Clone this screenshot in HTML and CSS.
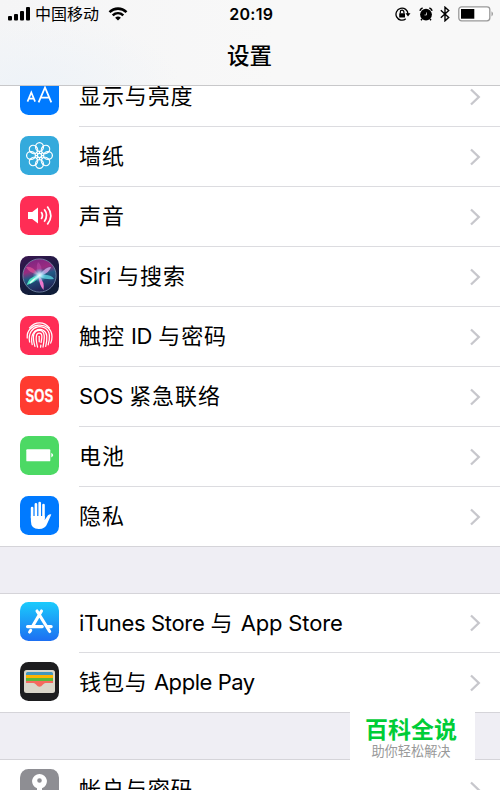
FILE: index.html
```html
<!DOCTYPE html>
<html lang="zh-CN">
<head>
<meta charset="utf-8">
<title>设置</title>
<link rel="stylesheet" href="styles.css">
</head>
<body>
<svg class="defs" width="0" height="0" aria-hidden="true">
  <defs>
    <symbol id="chevron" viewBox="0 0 12 18"><path d="M2 1.5 9.8 9 2 16.5" fill="none" stroke="#c7c7cc" stroke-width="2.3"/></symbol>
    <ellipse id="petal" cx="19.5" cy="11" rx="3.9" ry="4.4"/>
    <linearGradient id="store" x1="0" y1="0" x2="0" y2="1"><stop offset="0" stop-color="#1bcbfc"/><stop offset="1" stop-color="#1d6ff2"/></linearGradient>
    <linearGradient id="siribg" x1="0" y1="0" x2="0.4" y2="1"><stop offset="0" stop-color="#3b1550"/><stop offset=".5" stop-color="#1c1c42"/><stop offset="1" stop-color="#101d38"/></linearGradient>
    <linearGradient id="orb" x1="0.2" y1="0" x2="0.5" y2="1"><stop offset="0" stop-color="#7b2583"/><stop offset=".35" stop-color="#9a2b80"/><stop offset=".55" stop-color="#215b86"/><stop offset="1" stop-color="#222052"/></linearGradient>
    <radialGradient id="glow"><stop offset="0" stop-color="#fff"/><stop offset=".35" stop-color="#bdf3ff" stop-opacity=".75"/><stop offset="1" stop-color="#55c8ec" stop-opacity="0"/></radialGradient>
  </defs>
</svg>

<main class="phone">
  <header class="header">
    <div class="status">
      <div class="status-left">
        <svg width="23" height="14" viewBox="0 0 23 14"><rect x="0" y="9" width="4" height="4.500" rx="1"/><rect x="6" y="7" width="4" height="6.500" rx="1"/><rect x="12" y="4" width="4" height="9.500" rx="1"/><rect x="18" y="0" width="4" height="13.500" rx="1"/></svg>
        <span class="carrier">中国移动</span>
        <svg width="20" height="14" viewBox="0 0 20 14" fill="none" stroke="#000" stroke-width="2.6"><path d="M1.5 5.1C6.4.5 13.6.5 18.5 5.1M4.7 8.4c3.1-2.8 7.5-2.8 10.6 0"/><path d="M7.1 10.7q2.9-2.2 5.8 0L10 13.5Z" fill="#000" stroke="none"/></svg>
      </div>
      <time class="clock">20:19</time>
      <div class="status-right">
        <svg width="16" height="14" viewBox="0 0 16 14"><path d="M10.8 11.8A6 6 0 1 1 13 7" fill="none" stroke="#000" stroke-width="1.3"/><path d="M10.5 6.2h5L13 9.5Z"/><rect x="4.2" y="6.2" width="5.8" height="4.3" rx=".5"/><path d="M5.3 6.5V5a1.8 1.8 0 0 1 3.6 0v1.5" fill="none" stroke="#000" stroke-width="1.2"/></svg>
        <svg class="alarm" width="14" height="14" viewBox="0 0 14 14"><circle cx="7" cy="7.6" r="5.900"/><path d="M.9 3.7Q1.5 1.7 3.6 1M13.1 3.7Q12.5 1.7 10.4 1M3 12l-1 1.2M11 12l1 1.2" fill="none" stroke="#000" stroke-width="1.5"/><path d="M7.500 5.500V8H5.500" fill="none" stroke="#ddd" stroke-width=".8"/></svg>
        <svg class="bluetooth" width="10" height="16" viewBox="0 0 10 16"><path d="M.8 4.3 8.7 11.5 5 14.8V1.2l3.7 3.3L.8 11.7" fill="none" stroke="#000" stroke-width="1.4"/></svg>
        <svg class="power" width="37" height="16" viewBox="0 0 37 16"><rect x=".8" y=".8" width="31" height="14" rx="2.8" fill="#fff" stroke="#999" stroke-width="1.3"/><rect x="3" y="3" width="13.3" height="9.7"/><path d="M33.5 5.2q3 2.6 0 5.2Z" fill="#999"/></svg>
      </div>
    </div>
    <h1 class="title">设置</h1>
  </header>

  <section class="group group-first">
    <div class="row">
      <svg class="icon" viewBox="0 0 39 39"><rect width="39" height="39" rx="8.5" fill="#007aff"/><g fill="none" stroke="#fff"><path d="M7.5 25.6 11.3 16.5 15.1 25.6M8.9 22.6h4.8" stroke-width="1.7"/><path d="M18.600 26.400 25 11.500l6.300 14.900M20.600 21.600h8.800" stroke-width="1.800"/></g></svg>
      <div class="cell"><span class="label">显示与亮度</span><svg class="chevron"><use href="#chevron"/></svg></div>
    </div>
    <div class="row">
      <svg class="icon" viewBox="0 0 39 39"><rect width="39" height="39" rx="8.5" fill="#34aadc"/><g fill="none" stroke="#fff" stroke-width="1.250"><use href="#petal"/><use href="#petal" transform="rotate(45 19.5 19.5)"/><use href="#petal" transform="rotate(90 19.5 19.5)"/><use href="#petal" transform="rotate(135 19.5 19.5)"/><use href="#petal" transform="rotate(180 19.5 19.5)"/><use href="#petal" transform="rotate(225 19.5 19.5)"/><use href="#petal" transform="rotate(270 19.5 19.5)"/><use href="#petal" transform="rotate(315 19.5 19.5)"/><circle cx="19.5" cy="19.5" r="2.1"/><path d="M19.500 15v2.500M19.500 21.500v2.500M15 19.500h2.500M21.500 19.500h2.500M16.300 16.300l1.700 1.700M21 21l1.700 1.700M16.300 22.700l1.700-1.700M21 18l1.700-1.700"/></g></svg>
      <div class="cell"><span class="label">墙纸</span><svg class="chevron"><use href="#chevron"/></svg></div>
    </div>
    <div class="row">
      <svg class="icon" viewBox="0 0 39 39"><rect width="39" height="39" rx="8.5" fill="#ff2d55"/><path d="M8 16h4.2l5.8-4.400v15.800L12.200 23H8Z" fill="#fff"/><path d="M21.200 16q2.500 3.500 0 7M24.200 13.300q4.700 6.200 0 12.400M27.300 10.400q7 9.100 0 18.200" fill="none" stroke="#fff" stroke-width="1.700"/></svg>
      <div class="cell"><span class="label">声音</span><svg class="chevron"><use href="#chevron"/></svg></div>
    </div>
    <div class="row">
      <svg class="icon" viewBox="0 0 39 39"><rect width="39" height="39" rx="8.5" fill="url(#siribg)"/><circle cx="19.5" cy="19.5" r="16.6" fill="url(#orb)" stroke="#7a91ae" stroke-width=".8"/><path d="M19 19Q12 9 6 11q3 6 13 8Z" fill="#ef5b9c" opacity=".6"/><path d="M19 18q-4-6-1-12 5 4 3 12Z" fill="#b84aa9" opacity=".6"/><path d="M20 18q7-8 11-7-1 5-10 9Z" fill="#c6a0df" opacity=".9"/><path d="M20 19q11-1 14 4-8 1-14-2Z" fill="#57cbd9" opacity=".85"/><path d="M19 20q6 6 4.500 14Q19 29 18.500 20Z" fill="#ed77cc"/><path d="M18 19Q9 21 6.500 29q8-2 13-8Z" fill="#4fe3c1"/><path d="M19 20q-5 3-9 7" stroke="#d9fff5" stroke-width="1.600" fill="none"/><circle cx="19.5" cy="19.2" r="7" fill="url(#glow)"/></svg>
      <div class="cell"><span class="label"><span class="latin">Siri</span> 与搜索</span><svg class="chevron"><use href="#chevron"/></svg></div>
    </div>
    <div class="row">
      <svg class="icon" viewBox="0 0 39 39"><rect width="39" height="39" rx="8.5" fill="#ff2d55"/><g fill="none" stroke="#fff" stroke-width="1.25" stroke-linecap="round"><path d="M9.5 11.8C15 5.1 24.2 5.1 29.4 11.8"/><path d="M7.2 22C5.8 6 31.3 4.2 32 20.5q.1 3.6-1.3 6.6"/><path d="M9.6 26C6.2 7.4 28.4 6.4 29.4 19.4q.3 5-1.2 9.4"/><path d="M12.2 28.7C8.3 10.5 25.8 9.8 26.8 20q.3 5-1.1 10.3"/><path d="M14.9 30.4c-2.8-10-1.8-16.1 4.5-16.1 7.3 0 4.5 11 3.6 16.7"/><path d="M17.6 31.2c-2.3-9-1.8-14 1.7-14 4.1 0 2.2 6.2 1.8 9.3M20.8 29.2l-.2 2"/><path d="M19.2 20.3v5.5"/></g></svg>
      <div class="cell"><span class="label">触控 <span class="latin">ID</span> 与密码</span><svg class="chevron"><use href="#chevron"/></svg></div>
    </div>
    <div class="row">
      <svg class="icon" viewBox="0 0 39 39"><rect width="39" height="39" rx="8.5" fill="#ff3b30"/><text class="sos" x="5.6" y="26.2" textLength="27.5" lengthAdjust="spacingAndGlyphs">SOS</text></svg>
      <div class="cell"><span class="label"><span class="latin">SOS</span> 紧急联络</span><svg class="chevron"><use href="#chevron"/></svg></div>
    </div>
    <div class="row">
      <svg class="icon" viewBox="0 0 39 39"><rect width="39" height="39" rx="8.5" fill="#4cd964"/><rect x="6.3" y="13.3" width="24" height="12" rx=".9" fill="#fff"/><path d="M31.300 16.800q3.800 2.400 0 4.800Z" fill="#fff"/></svg>
      <div class="cell"><span class="label">电池</span><svg class="chevron"><use href="#chevron"/></svg></div>
    </div>
    <div class="row row-last">
      <svg class="icon" viewBox="0 0 39 39"><rect width="39" height="39" rx="8.5" fill="#007aff"/><path d="M10.900 20h13.800v4l3.300-4.700q2-1.700 3.300-.9L27.500 27q-2 6-8.700 6-7.900 0-7.900-8Z" fill="#fff"/><path d="M12.100 22V12M15.900 21V8.200M19.700 21V7M23.500 22V9" stroke="#fff" stroke-width="2.600" stroke-linecap="round"/></svg>
      <div class="cell"><span class="label">隐私</span><svg class="chevron"><use href="#chevron"/></svg></div>
    </div>
  </section>

  <section class="group group-store">
    <div class="row">
      <svg class="icon" viewBox="0 0 39 39"><rect width="39" height="39" rx="8.5" fill="url(#store)"/><g stroke="#fff" stroke-width="3.100" stroke-linecap="round" fill="none"><path d="M21.500 9 13 23.500M17 9l12.700 20.500M7.500 24.600h14.800M27.200 24.600h4M10.700 28.300l-1.100 1.700"/></g></svg>
      <div class="cell"><span class="label"><span class="latin">iTunes Store</span> 与 <span class="latin app">App Store</span></span><svg class="chevron"><use href="#chevron"/></svg></div>
    </div>
    <div class="row row-last">
      <svg class="icon" viewBox="0 0 39 39"><rect width="39" height="39" rx="8.5" fill="#1d1d1f"/><rect x="4" y="8" width="31" height="23" rx="2.5" fill="#dad6ca"/><path d="M6 12v-.5Q6 10 7.5 10h24q1.500 0 1.500 1.500V13H6Z" fill="#4397bd"/><path d="M6 13h27v3H6Z" fill="#ffb300"/><path d="M6 16h27v3H6Z" fill="#5bb83b"/><path d="M6 19h27v2h-7.500q-1.500 0-2.500 1.500-3.500 4.500-7 0-1-1.500-2.500-1.500H6Z" fill="#f5695e"/></svg>
      <div class="cell"><span class="label">钱包与 <span class="latin pay">Apple Pay</span></span><svg class="chevron"><use href="#chevron"/></svg></div>
    </div>
  </section>

  <section class="group group-accounts">
    <div class="row">
      <svg class="icon" viewBox="0 0 39 39"><rect width="39" height="39" rx="8.5" fill="#8e8e93"/><path fill="#fff" fill-rule="evenodd" d="M19.500 5a7.300 7.300 0 0 1 2.500 14.200V31l-2.500 3-2.500-3V19.200A7.300 7.300 0 0 1 19.500 5Zm0 4.200a2.300 2.300 0 1 0 0 4.600 2.300 2.300 0 0 0 0-4.600Z"/></svg>
      <div class="cell"><span class="label">帐户与密码</span><svg class="chevron"><use href="#chevron"/></svg></div>
    </div>
  </section>

  <aside class="badge"><strong class="badge-name">百科全说</strong><span class="badge-note">助你轻松解决</span></aside>
</main>
</body>
</html>
```
FILE: styles.css
```css
* { box-sizing: border-box; }

body {
  margin: 0;
  overflow: hidden;
  font-family: Inter, "Noto Sans CJK SC", sans-serif;
  color: #000;
}

svg { display: block; flex: none; }
.defs { position: absolute; }

.phone {
  position: relative;
  width: 500px;
  height: 790px;
  overflow: hidden;
  background: #efeef4;
}

.header {
  position: relative;
  z-index: 1;
  height: 86px;
  border-bottom: 1px solid #c8c8ca;
  background: radial-gradient(ellipse 150px 70px at 30px 85px, #eef3f8, transparent), linear-gradient(90deg, #f5f5f6, #f8f8f8 55%);
}

.status {
  display: grid;
  grid-template-columns: 1fr auto 1fr;
  align-items: center;
  height: 28px;
  padding: 0 7px 0 8px;
}

.status-left, .status-right { display: flex; align-items: center; }
.status-right { justify-content: flex-end; }
.carrier { margin: 0 9px 0 4px; font-size: 16px; line-height: 24px; }
.clock { padding-left: 1.5px; font-size: 16px; font-weight: 600; letter-spacing: .3px; }
.alarm { margin-left: 8px; }
.bluetooth { margin-left: 7px; }
.power { margin-left: 8px; margin-right: -2px; }

.title {
  margin: 11px 0 0;
  padding-right: 1px;
  font-size: 22.5px;
  line-height: 34px;
  font-weight: 500;
  text-align: center;
}

.group { background: #fff; }
.group-first { margin-top: -19px; }
.group-store { margin-top: 46px; border-top: 1px solid #d5d4d9; }
.group-store .row:first-child { height: 59px; }
.group-store .row:first-child .icon { margin-top: 8px; }
.group-accounts { margin-top: 46px; border-top: 1px solid #d5d4d9; }

.row { display: flex; height: 60px; padding-left: 20px; }
.icon { width: 39px; height: 39px; margin: 9px 20px 0 0; }

.cell {
  flex: 1;
  display: flex;
  align-items: center;
  justify-content: space-between;
  padding: 0 19px 0 0;
  border-bottom: 1px solid #dcdce0;
}
.row-last { border-bottom: 1px solid #d5d4d9; }
.row-last .cell { border-bottom: 0; }

.label { margin-top: -1px; font-size: 22px; line-height: 34px; letter-spacing: .9px; word-spacing: -.9px; white-space: nowrap; }
.latin { letter-spacing: -.35px; word-spacing: 0; }
.app { margin-left: 1px; letter-spacing: -.15px; }
.pay { letter-spacing: -.45px; }
.chevron { width: 12px; height: 18px; }
.sos { fill: #fff; stroke: #fff; stroke-width: .3px; font: 700 18px "Liberation Sans", sans-serif; }

.badge {
  position: absolute;
  z-index: 2;
  left: 350px;
  top: 712px;
  width: 125px;
  height: 50px;
  display: flex;
  flex-direction: column;
  align-items: center;
  padding-right: 3px;
  background: #fff;
}
.badge-name { padding-top: 4px; font-size: 23px; line-height: 28px; font-weight: 700; color: #00cd37; }
.badge-note { font-size: 13.2px; line-height: 15px; color: #999; }
```
